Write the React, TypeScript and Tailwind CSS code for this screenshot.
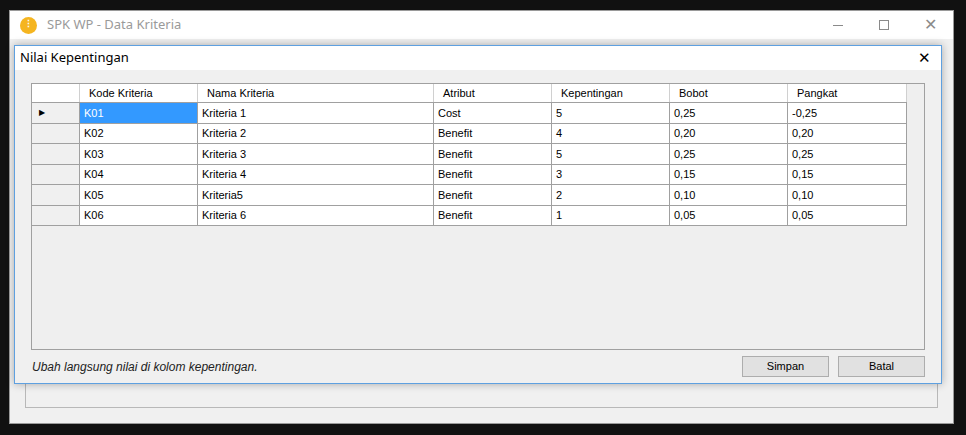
import React from "react";

const rows = [
  ["K01", "Kriteria 1", "Cost", "5", "0,25", "-0,25"],
  ["K02", "Kriteria 2", "Benefit", "4", "0,20", "0,20"],
  ["K03", "Kriteria 3", "Benefit", "5", "0,25", "0,25"],
  ["K04", "Kriteria 4", "Benefit", "3", "0,15", "0,15"],
  ["K05", "Kriteria5", "Benefit", "2", "0,10", "0,10"],
  ["K06", "Kriteria 6", "Benefit", "1", "0,05", "0,05"],
];
const heads = ["Kode Kriteria", "Nama Kriteria", "Atribut", "Kepentingan", "Bobot", "Pangkat"];
const widths = [118, 236, 118, 118, 118, 119];

export default function App() {
  return (
    <div className="relative w-[966px] h-[435px] bg-[#111111] overflow-hidden text-[12px] text-black" style={{ fontFamily: "'Liberation Sans', Arial, sans-serif" }}>
      <div className="absolute left-[9px] top-[10px] w-[945px] h-[414px] bg-[#f0f0f0] border border-[#9a9a9a] flex flex-col">
        <div className="h-[28px] bg-white flex items-center pl-[10px] shrink-0">
          <div className="w-[17px] h-[17px] rounded-full bg-[#f5b520] flex items-center justify-center text-white text-[9px] font-bold">⋮</div>
          <span className="ml-[10px] text-[13px] text-[#9a9a9a]" style={{ fontFamily: "'Segoe UI', 'Noto Sans', sans-serif" }}>SPK WP - Data Kriteria</span>
          <div className="ml-auto flex items-center text-[#8a8a8a]">
            <div className="w-[46px] flex justify-center"><div className="w-[10px] h-px bg-[#8a8a8a]" /></div>
            <div className="w-[46px] flex justify-center"><div className="w-[10px] h-[10px] border border-[#8a8a8a]" /></div>
            <div className="w-[46px] flex justify-center text-[16px] font-light">✕</div>
          </div>
        </div>
        <div className="flex-1 px-[15px] pt-[344px]">
          <div className="h-[25px] border border-[#b8b8b8] bg-[#f0f0f0]" />
        </div>
      </div>
      <div className="absolute left-[14px] top-[45px] w-[928px] h-[339px] bg-[#f0f0f0] border border-[#5ea0e0] shadow-[0_0_8px_rgba(0,0,0,0.3)] flex flex-col">
        <div className="h-[24px] bg-white flex items-center pl-[5px] shrink-0">
          <span className="text-[13px]" style={{ fontFamily: "'Segoe UI', 'Noto Sans', sans-serif" }}>Nilai Kepentingan</span>
          <span className="ml-auto mr-[10px] text-[15px]">✕</span>
        </div>
        <div className="ml-[16px] mt-[13px] w-[894px] h-[267px] border border-[#a0a0a0] bg-[#efefef]">
          <div className="flex w-fit h-[19px] bg-white border-b border-[#a0a0a0]">
            <div className="w-[48px] border-r border-[#d0d0d0]" />
            {heads.map((h, i) => (
              <div key={h} className="border-r border-[#d0d0d0] pl-[9px] flex items-center text-[11px]" style={{ width: widths[i] }}>{h}</div>
            ))}
          </div>
          {rows.map((r, ri) => (
            <div key={ri} className="flex w-fit h-[20.5px] bg-white border-b border-[#a0a0a0]">
              <div className="w-[48px] border-r border-[#a0a0a0] bg-[#f0f0f0] flex items-center pl-[7px] text-[8px]">{ri === 0 ? "▶" : ""}</div>
              {r.map((c, ci) => (
                <div key={ci} className={`border-r border-[#a0a0a0] pl-[4px] flex items-center text-[11px] ${ri === 0 && ci === 0 ? "bg-[#3399ff] text-white" : ""}`} style={{ width: widths[ci] }}>{c}</div>
              ))}
            </div>
          ))}
        </div>
        <div className="flex items-center mt-[6px] pl-[17px] pr-[16px]">
          <span className="italic text-[12px] text-[#222]">Ubah langsung nilai di kolom kepentingan.</span>
          <button className="ml-auto w-[87px] h-[21px] bg-[#e1e1e1] border border-[#adadad] text-[11px]">Simpan</button>
          <button className="ml-[9px] w-[87px] h-[21px] bg-[#e1e1e1] border border-[#adadad] text-[11px]">Batal</button>
        </div>
      </div>
    </div>
  );
}
